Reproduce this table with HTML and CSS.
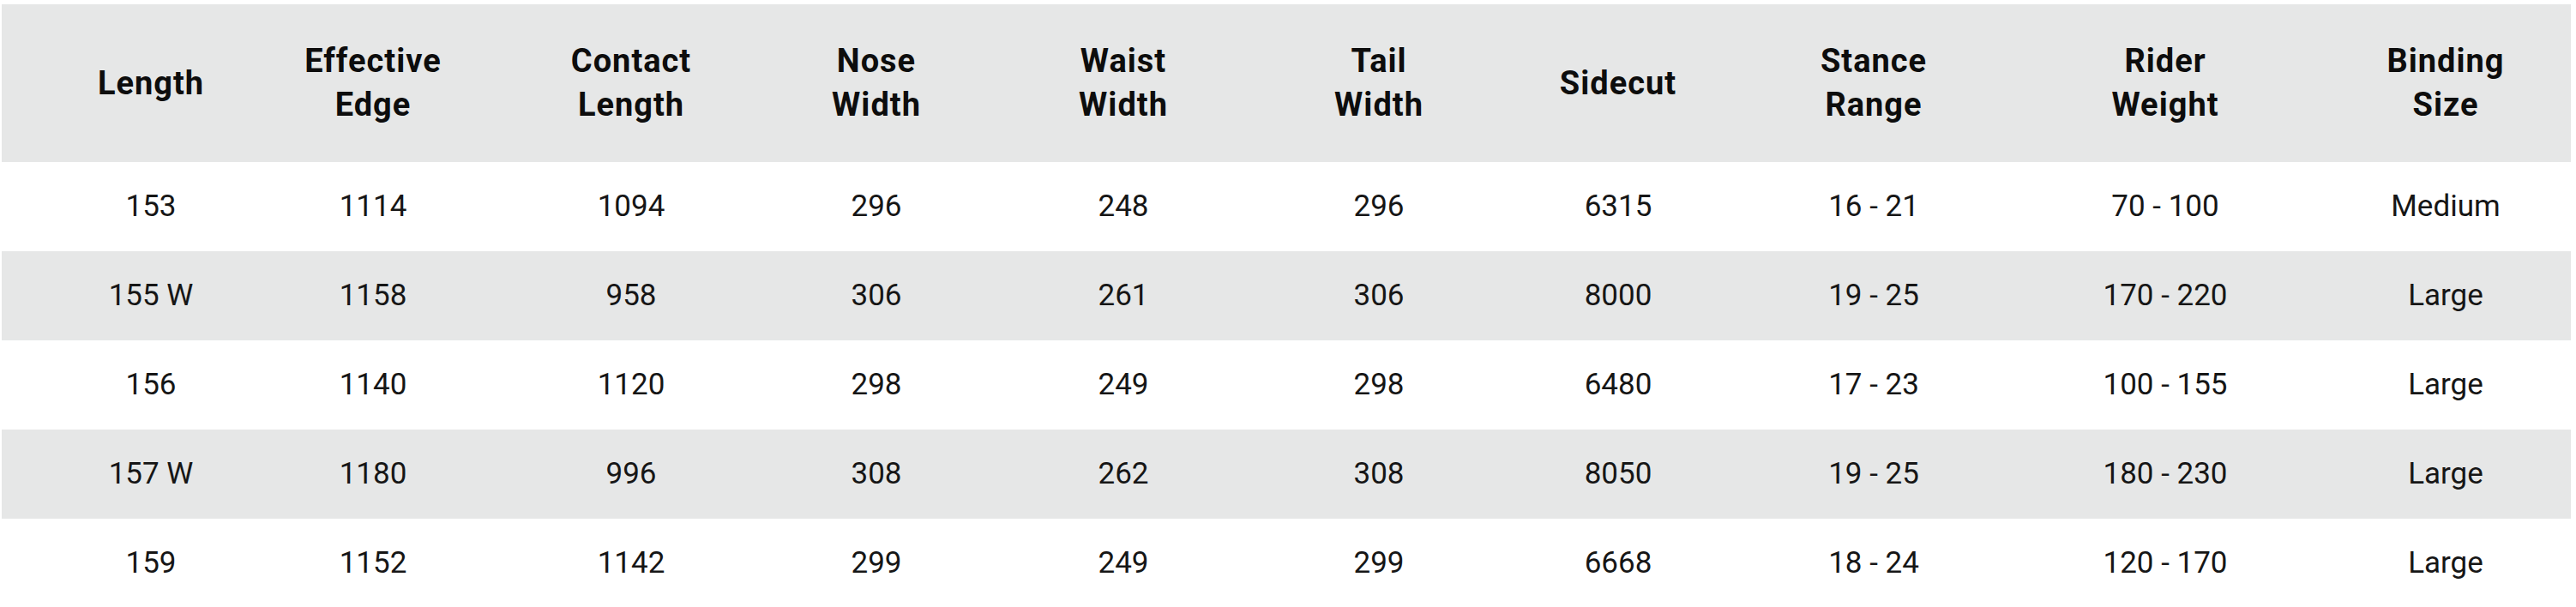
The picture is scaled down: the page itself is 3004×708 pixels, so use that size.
FILE: index.html
```html
<!DOCTYPE html>
<html lang="en">
<head>
<meta charset="utf-8">
<title>Board Specs</title>
<link rel="stylesheet" href="styles.css">
</head>
<body>
<table class="specs">
  <colgroup>
    <col class="c-length">
    <col class="c-edge">
    <col class="c-contact">
    <col class="c-nose">
    <col class="c-waist">
    <col class="c-tail">
    <col class="c-sidecut">
    <col class="c-stance">
    <col class="c-weight">
    <col class="c-binding">
  </colgroup>
  <thead>
    <tr>
      <th>Length</th>
      <th>Effective<br>Edge</th>
      <th>Contact<br>Length</th>
      <th>Nose<br>Width</th>
      <th>Waist<br>Width</th>
      <th>Tail<br>Width</th>
      <th>Sidecut</th>
      <th>Stance<br>Range</th>
      <th>Rider<br>Weight</th>
      <th>Binding<br>Size</th>
    </tr>
  </thead>
  <tbody>
    <tr>
      <td>153</td><td>1114</td><td>1094</td><td>296</td><td>248</td><td>296</td><td>6315</td><td>16 - 21</td><td>70 - 100</td><td>Medium</td>
    </tr>
    <tr>
      <td>155 W</td><td>1158</td><td>958</td><td>306</td><td>261</td><td>306</td><td>8000</td><td>19 - 25</td><td>170 - 220</td><td>Large</td>
    </tr>
    <tr>
      <td>156</td><td>1140</td><td>1120</td><td>298</td><td>249</td><td>298</td><td>6480</td><td>17 - 23</td><td>100 - 155</td><td>Large</td>
    </tr>
    <tr>
      <td>157 W</td><td>1180</td><td>996</td><td>308</td><td>262</td><td>308</td><td>8050</td><td>19 - 25</td><td>180 - 230</td><td>Large</td>
    </tr>
    <tr>
      <td>159</td><td>1152</td><td>1142</td><td>299</td><td>249</td><td>299</td><td>6668</td><td>18 - 24</td><td>120 - 170</td><td>Large</td>
    </tr>
  </tbody>
</table>
</body>
</html>
```

FILE: styles.css
```css
html, body {
  margin: 0;
  padding: 0;
  background: #ffffff;
}

body {
  padding: 5px 6px 0 2px;
  font-family: Roboto, "Liberation Sans", sans-serif;
  color: #151515;
}

.specs {
  width: 2996px;
  border-collapse: collapse;
  border-spacing: 0;
  table-layout: fixed;
}

.c-length  { width: 292px; }
.c-edge    { width: 282px; }
.c-contact { width: 320px; }
.c-nose    { width: 252px; }
.c-waist   { width: 324px; }
.c-tail    { width: 272px; }
.c-sidecut { width: 286px; }
.c-stance  { width: 310px; }
.c-weight  { width: 370px; }
.c-binding { width: 288px; }

.specs th,
.specs td {
  padding: 0;
  text-align: center;
  vertical-align: middle;
}

.specs th:first-child,
.specs td:first-child {
  padding-left: 56px;
}

.specs th:last-child,
.specs td:last-child {
  padding-right: 4px;
}

.specs thead tr {
  height: 184px;
  background: #e6e7e7;
}

.specs th {
  font-size: 38px;
  font-weight: 700;
  line-height: 51px;
  color: #0d0d0d;
  letter-spacing: 1px;
}

.specs tbody tr {
  height: 104px;
}

.specs tbody tr:nth-child(even) {
  background: #e6e7e7;
}

.specs td {
  font-size: 35px;
  font-weight: 400;
  line-height: 40px;
  color: #161616;
}
```
